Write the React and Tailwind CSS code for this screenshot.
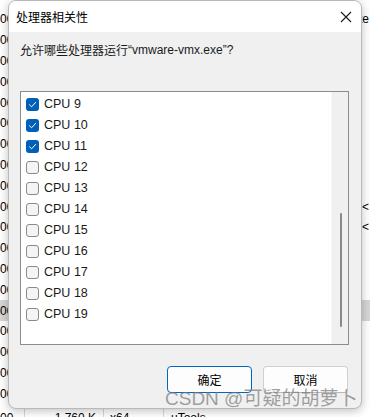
import React from "react";

const cpus = [
    { n: 9, on: true },
    { n: 10, on: true },
    { n: 11, on: true },
    { n: 12, on: false },
    { n: 13, on: false },
    { n: 14, on: false },
    { n: 15, on: false },
    { n: 16, on: false },
    { n: 17, on: false },
    { n: 18, on: false },
    { n: 19, on: false },
]

const bgRows = Array.from({ length: 19 }, (_, i) => i)

const CheckBox = ({ on }) => {
    if (on) {
        return (
            <div className="w-[13px] h-[13px] rounded-[3px] bg-[#005fb8] flex items-center justify-center">
                <svg width="9" height="9" viewBox="0 0 9 9" fill="none">
                    <path d="M1.5 4.8 L3.6 6.8 L7.6 2.4" stroke="#ffffff" strokeWidth="1" strokeLinecap="round" strokeLinejoin="round" />
                </svg>
            </div>
        )
    }
    return <div className="w-[13px] h-[13px] rounded-[3px] border border-[#8a8a8a] bg-[#f4f4f4]"></div>
}

const App = () => {
    return (
        <div className="relative w-[370px] h-[417px] overflow-hidden bg-white text-black font-['Liberation_Sans','Noto_Sans_CJK_SC',sans-serif]">
            {/* task manager behind the dialog */}
            <div className="pt-[9px] text-[12px] leading-none">
                {bgRows.map((i) => (
                    <div key={i} className={`h-[20.8px] flex items-center justify-between ${i === 14 ? 'bg-[#d6d6d6]' : ''}`}>
                        <span>00</span>
                        <span className="pr-[1px]">{i === 0 ? 'te' : (i === 9 || i === 10) ? '<' : ''}</span>
                    </div>
                ))}
                <div className="mt-[3px] h-[20.8px] flex items-center">
                    <span className="w-[25px] border-r border-[#d8d8d8] h-full flex items-center">00</span>
                    <span className="w-[79px] border-r border-[#d8d8d8] h-full flex items-center justify-end pr-[7px]">1,760 K</span>
                    <span className="w-[60px] border-r border-[#d8d8d8] h-full flex items-center pl-[6px]">x64</span>
                    <span className="pl-[7px]">uTools</span>
                </div>
            </div>

            {/* dialog window */}
            <div className="absolute left-[8px] top-0 w-[354px] h-[409px] rounded-[8px] border border-[#b9b9b9] bg-[#f0f0f0] shadow-[0_2px_10px_rgba(0,0,0,0.25)] overflow-hidden flex flex-col">
                <div className="h-[31px] bg-white flex items-center justify-between pl-[7px] pr-[9px] shrink-0">
                    <span className="text-[12px] font-['Noto_Sans_CJK_SC',sans-serif]">处理器相关性</span>
                    <svg width="12" height="12" viewBox="0 0 12 12" fill="none">
                        <path d="M1 1 L11 11 M11 1 L1 11" stroke="#1a1a1a" strokeWidth="1.1" />
                    </svg>
                </div>
                <div className="pl-[11px] mt-[9px] h-[18px] flex items-center text-[12px] text-[#1a1a1a]">
                    <span className="font-['Noto_Sans_CJK_SC',sans-serif]">允许哪些处理器运行</span>
                    <span>“vmware-vmx.exe”?</span>
                </div>
                <div className="ml-[11px] mt-[32px] w-[329px] h-[254px] border border-[#8c8c8c] bg-white flex">
                    <div className="flex-1 pt-[2px] pl-[5px]">
                        {cpus.map((c) => (
                            <div key={c.n} className="h-[21px] flex items-center gap-[5px]">
                                <CheckBox on={c.on} />
                                <span className="text-[12.5px] text-[#1a1a1a]">CPU {c.n}</span>
                            </div>
                        ))}
                    </div>
                    <div className="w-[17px] bg-[#f0f0f0] border-l border-[#f6f6f6] relative">
                        <div className="absolute left-[8px] top-[121px] w-[2px] h-[114px] rounded-full bg-[#8a8a8a]"></div>
                    </div>
                </div>
                <div className="mt-[21px] flex gap-[11px] pl-[158px]">
                    <div className="w-[85px] h-[27px] rounded-[4px] border border-[#0067c0] bg-[#fdfdfd] flex items-center justify-center text-[12px] font-['Noto_Sans_CJK_SC',sans-serif]">确定</div>
                    <div className="w-[85px] h-[27px] rounded-[4px] border border-[#d0d0d0] border-b-[#b8b8b8] bg-[#fdfdfd] flex items-center justify-center text-[12px] font-['Noto_Sans_CJK_SC',sans-serif]">取消</div>
                </div>
            </div>

            {/* watermark */}
            <div className="absolute left-[165px] top-[389px] text-[19px] leading-none text-[rgba(120,120,120,0.7)] whitespace-nowrap font-['Liberation_Sans','Noto_Sans_CJK_SC',sans-serif]">
                CSDN @可疑的胡萝卜
            </div>
        </div>
    )
}

export default App
